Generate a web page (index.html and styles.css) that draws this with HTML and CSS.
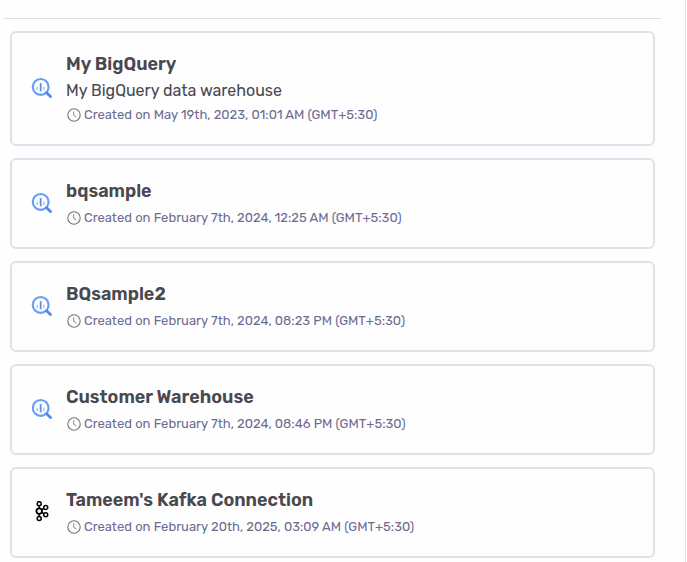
FILE: index.html
```html
<!DOCTYPE html>
<html lang="en">
<head>
<meta charset="utf-8">
<title>Connections</title>
<link rel="stylesheet" href="styles.css">
</head>
<body>
<svg class="sprite" aria-hidden="true">
  <symbol id="bigquery" viewBox="0 0 22 22">
    <circle cx="9.7" cy="9.9" r="7.9" fill="none" stroke="#669df6" stroke-width="2.2"/>
    <path d="M15.6 15.8l3.9 3.8" fill="none" stroke="#5089ea" stroke-width="2.8" stroke-linecap="round"/>
    <path d="M6.3 9.9v3.2M12.9 9.6v3.6" stroke="#a9c8fa" stroke-width="1.5"/>
    <path d="M9.7 6.1v8.2" stroke="#5b90ea" stroke-width="1.8"/>
  </symbol>
  <symbol id="kafka" viewBox="0 0 22 22">
    <g fill="none" stroke="#000" stroke-width="1.5">
      <path d="M8.2 4.4v2.9M8.2 13v2.9M10.7 8.8l2.2-1.3M10.7 11.4l2.2 1.3"/>
      <circle cx="8.2" cy="2.7" r="2"/>
      <circle cx="8.2" cy="10.1" r="2.8" stroke-width="1.8"/>
      <circle cx="8.2" cy="17.6" r="2"/>
      <circle cx="14.7" cy="6.4" r="2"/>
      <circle cx="14.7" cy="13.8" r="2"/>
    </g>
  </symbol>
  <symbol id="clock" viewBox="0 0 16 16">
    <circle cx="8" cy="8" r="6.2" fill="none" stroke="#74747f" stroke-width="1.1"/>
    <path d="M7.7 4.3v4l2.6 1.6" fill="none" stroke="#85858f" stroke-width="1"/>
  </symbol>
</svg>
<main class="panel">
  <hr class="divider">
  <ul class="list">
    <li class="card">
      <svg class="logo" aria-hidden="true"><use href="#bigquery"/></svg>
      <div>
        <h2 class="title">My BigQuery</h2>
        <p class="description">My BigQuery data warehouse</p>
        <p class="meta"><svg class="clock" aria-hidden="true"><use href="#clock"/></svg>Created on May 19th, 2023, 01:01 AM (GMT+5:30)</p>
      </div>
    </li>
    <li class="card">
      <svg class="logo" aria-hidden="true"><use href="#bigquery"/></svg>
      <div>
        <h2 class="title">bqsample</h2>
        <p class="meta"><svg class="clock" aria-hidden="true"><use href="#clock"/></svg>Created on February 7th, 2024, 12:25 AM (GMT+5:30)</p>
      </div>
    </li>
    <li class="card">
      <svg class="logo" aria-hidden="true"><use href="#bigquery"/></svg>
      <div>
        <h2 class="title">BQsample2</h2>
        <p class="meta"><svg class="clock" aria-hidden="true"><use href="#clock"/></svg>Created on February 7th, 2024, 08:23 PM (GMT+5:30)</p>
      </div>
    </li>
    <li class="card">
      <svg class="logo" aria-hidden="true"><use href="#bigquery"/></svg>
      <div>
        <h2 class="title">Customer Warehouse</h2>
        <p class="meta"><svg class="clock" aria-hidden="true"><use href="#clock"/></svg>Created on February 7th, 2024, 08:46 PM (GMT+5:30)</p>
      </div>
    </li>
    <li class="card">
      <svg class="logo" aria-hidden="true"><use href="#kafka"/></svg>
      <div>
        <h2 class="title">Tameem's Kafka Connection</h2>
        <p class="meta"><svg class="clock" aria-hidden="true"><use href="#clock"/></svg>Created on February 20th, 2025, 03:09 AM (GMT+5:30)</p>
      </div>
    </li>
  </ul>
</main>
</body>
</html>
```
FILE: styles.css
```css
* {
  box-sizing: border-box;
}

body {
  margin: 0;
  background: #fefefe;
  color: #49484f;
  font-family: Rubik, Roboto, sans-serif;
}

.sprite {
  position: absolute;
  width: 0;
  height: 0;
}

.panel {
  min-height: 100vh;
  margin-right: 1px;
  padding: 18px 24px 3px 4px;
  border-right: 1px solid #e3e4e9;
}

.divider {
  height: 1px;
  margin: 0;
  border: 0;
  background: #dddee3;
}

.list {
  display: flex;
  flex-direction: column;
  gap: 12px;
  margin: 12px 6px 0;
  padding: 0;
  list-style: none;
}

.card {
  display: flex;
  align-items: center;
  gap: 13px;
  padding: 16px 19px 17px;
  border: 2px solid #dfe2e9;
  border-radius: 6px;
}

.logo {
  flex: none;
  width: 22px;
  height: 22px;
}

.title,
.description,
.meta {
  margin: 0;
}

.title {
  font-size: 18px;
  font-weight: 600;
  line-height: 30px;
}

.description {
  font-size: 16px;
  line-height: 24px;
}

.meta {
  display: flex;
  align-items: center;
  gap: 2px;
  color: #6d6b92;
  font-size: 13px;
  font-weight: 400;
  line-height: 24px;
}

.clock {
  flex: none;
  width: 16px;
  height: 16px;
}
```
